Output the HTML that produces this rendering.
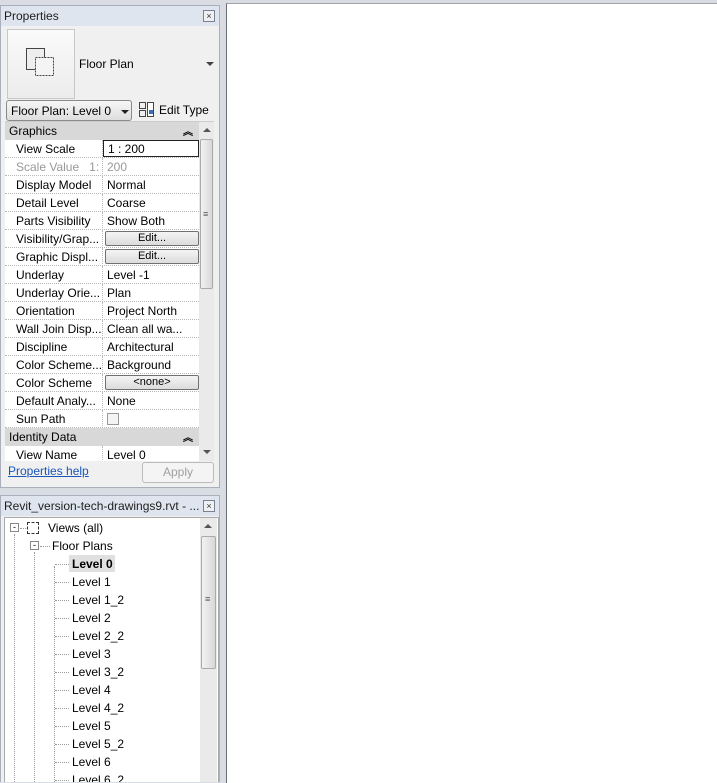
<!DOCTYPE html>
<html><head><style>
*{box-sizing:border-box;margin:0;padding:0}
html,body{width:717px;height:783px;overflow:hidden}
body{background:#d9dde3;font-family:"Liberation Sans",sans-serif;font-size:12px;color:#000;position:relative}
.abs{position:absolute}
.panel{position:absolute;left:0;width:220px;background:#f0f0f0;border:1px solid #a9b0bb;overflow:hidden}
.title{position:absolute;left:0;right:0;top:0;height:20px;background:#dfe5ee;color:#1e1e1e;padding:3px 0 0 3px;font-size:12px}
.xbtn{position:absolute;right:4px;top:4px;width:12px;height:12px;border:1px solid #7a8190;background:#eef0f3;font-size:9px;line-height:10px;text-align:center;color:#333}
.row{position:absolute;left:4px;width:194px;height:18px;border-bottom:1px dotted #b8b8b8;background:#fff}
.row .n{position:absolute;left:0;width:98px;height:18px;padding:2px 0 0 11px;border-right:1px dotted #b8b8b8;white-space:nowrap;overflow:hidden}
.row .v{position:absolute;left:98px;width:96px;padding:2px 0 0 4px;white-space:nowrap;overflow:hidden}
.hdr{position:absolute;left:4px;width:194px;height:18px;background:#d8d8d8;padding:2px 0 0 4px}
.hdr span{position:absolute;right:6px;top:1px;font-size:10px;font-weight:bold}
.btn{position:absolute;left:100px;top:1px;width:94px;height:15px;border:1px solid #707070;border-radius:2px;background:linear-gradient(#f4f4f4,#dcdcdc);text-align:center;font-size:11px;line-height:13px}
.tr{position:absolute;height:18px;line-height:18px;white-space:nowrap;font-weight:normal}
.dh{position:absolute;border-top:1px dotted #999;width:14px}
.tbl{position:absolute;left:0;top:-2px;width:220px;height:460px}
</style></head><body>
<div class="abs" style="left:226px;top:3px;width:491px;height:780px;background:#fff;border-left:1px solid #6b6f75;border-top:1px solid #a0a4aa"></div>

<div class="panel" style="top:5px;height:483px">
  <div class="title">Properties<div class="xbtn">×</div></div>
  <div class="abs" style="left:6px;top:23px;width:68px;height:70px;border:1px solid #c8c8c8;background:linear-gradient(#fafafa,#ececec)"></div>
  <svg class="abs" style="left:24px;top:41px" width="34" height="34"><rect x="1.5" y="1.5" width="18" height="21" fill="#eee" stroke="#444"/><rect x="10.5" y="10.5" width="18" height="18" fill="#f4f4f4" stroke="#444" stroke-dasharray="2 1"/></svg>
  <div class="abs" style="left:78px;top:51px;font-size:12px">Floor Plan</div>
  <div class="abs" style="left:205px;top:56px;width:0;height:0;border-left:4px solid transparent;border-right:4px solid transparent;border-top:4px solid #444"></div>
  <div class="abs" style="left:5px;top:94px;width:126px;height:21px;border:1px solid #8a8a8a;border-radius:3px;background:linear-gradient(#f6f6f6,#dedede);padding:3px 0 0 4px">Floor Plan: Level 0</div>
  <div class="abs" style="left:120px;top:104px;border-left:4px solid transparent;border-right:4px solid transparent;border-top:4px solid #222"></div>
  <svg class="abs" style="left:137px;top:95px" width="18" height="18"><rect x="1.5" y="1.5" width="6" height="6" fill="none" stroke="#444"/><rect x="1.5" y="9.5" width="6" height="6" fill="none" stroke="#444"/><rect x="9.5" y="1.5" width="6" height="14" fill="#fff" stroke="#444"/><rect x="11" y="9" width="4" height="4" fill="#3a6fb5"/></svg>
  <div class="abs" style="left:158px;top:97px">Edit Type</div>
  <div class="tbl">
  <div class="abs" style="left:4px;top:117px;width:209px;height:340px;background:#fff;border-top:1px solid #ccc"></div>
  <div class="hdr" style="top:118px">Graphics<span>︽</span></div>
  <div class="row" style="top:136px"><div class="n">View Scale</div><div class="v" style="border:1px solid #222;height:17px;padding-top:1px">1 : 200</div></div>
  <div class="row" style="top:154px;color:#999"><div class="n">Scale Value &nbsp;&nbsp;1:</div><div class="v">200</div></div>
  <div class="row" style="top:172px"><div class="n">Display Model</div><div class="v">Normal</div></div>
  <div class="row" style="top:190px"><div class="n">Detail Level</div><div class="v">Coarse</div></div>
  <div class="row" style="top:208px"><div class="n">Parts Visibility</div><div class="v">Show Both</div></div>
  <div class="row" style="top:226px"><div class="n">Visibility/Grap...</div><div class="btn">Edit...</div></div>
  <div class="row" style="top:244px"><div class="n">Graphic Displ...</div><div class="btn">Edit...</div></div>
  <div class="row" style="top:262px"><div class="n">Underlay</div><div class="v">Level -1</div></div>
  <div class="row" style="top:280px"><div class="n">Underlay Orie...</div><div class="v">Plan</div></div>
  <div class="row" style="top:298px"><div class="n">Orientation</div><div class="v">Project North</div></div>
  <div class="row" style="top:316px"><div class="n">Wall Join Disp...</div><div class="v">Clean all wa...</div></div>
  <div class="row" style="top:334px"><div class="n">Discipline</div><div class="v">Architectural</div></div>
  <div class="row" style="top:352px"><div class="n">Color Scheme...</div><div class="v">Background</div></div>
  <div class="row" style="top:370px"><div class="n">Color Scheme</div><div class="btn">&lt;none&gt;</div></div>
  <div class="row" style="top:388px"><div class="n">Default Analy...</div><div class="v">None</div></div>
  <div class="row" style="top:406px"><div class="n">Sun Path</div><div class="v"><div style="width:12px;height:12px;border:1px solid #999;background:#f4f4f4;margin-top:1px"></div></div></div>
  <div class="hdr" style="top:424px">Identity Data<span>︽</span></div>
  <div class="row" style="top:442px;height:15px;overflow:hidden;border:none"><div class="n">View Name</div><div class="v">Level 0</div></div>
  <div class="abs" style="left:198px;top:118px;width:15px;height:339px;background:#eaeaea"></div>
  <div class="abs" style="left:202px;top:124px;border-left:4px solid transparent;border-right:4px solid transparent;border-bottom:4px solid #555"></div>
  <div class="abs" style="left:199px;top:135px;width:13px;height:150px;border:1px solid #aaa;border-radius:2px;background:linear-gradient(90deg,#f2f2f2,#d8d8d8)"></div>
  <div class="abs" style="left:202px;top:205px;font-size:9px;color:#555">≡</div>
  <div class="abs" style="left:202px;top:446px;border-left:4px solid transparent;border-right:4px solid transparent;border-top:4px solid #555"></div>
  </div>
  <div class="abs" style="left:7px;top:458px;color:#1a56b8;text-decoration:underline">Properties help</div>
  <div class="abs" style="left:141px;top:456px;width:72px;height:21px;border:1px solid #bbb;border-radius:3px;background:#f4f4f4;color:#a0a0a0;text-align:center;line-height:19px">Apply</div>
</div>

<div class="panel" style="top:495px;height:287px;border-bottom:none">
  <div class="title">Revit_version-tech-drawings9.rvt - ...<div class="xbtn">×</div></div>
  <div class="abs" style="left:3px;top:21px;width:215px;height:270px;background:#fff;border:1px solid #aaa"></div>
  <div class="abs" style="left:199px;top:22px;width:17px;height:268px;background:#eaeaea"></div>
  <div class="abs" style="left:203px;top:28px;border-left:4px solid transparent;border-right:4px solid transparent;border-bottom:4px solid #555"></div>
  <div class="abs" style="left:200px;top:40px;width:15px;height:133px;border:1px solid #aaa;border-radius:2px;background:linear-gradient(90deg,#f2f2f2,#d8d8d8)"></div>
  <div class="abs" style="left:204px;top:98px;font-size:9px;color:#555">≡</div>
  <div class="abs" style="left:13px;top:38px;height:260px;border-left:1px dotted #999"></div>
  <div class="abs" style="left:33px;top:56px;height:240px;border-left:1px dotted #999"></div>
  <div class="abs" style="left:53px;top:70px;height:220px;border-left:1px dotted #999"></div>
  <div class="abs" style="left:9px;top:27px;width:9px;height:9px;border:1px solid #888;background:#fff;font-size:9px;line-height:6px;text-align:center">-</div>
  <div class="dh" style="left:19px;top:32px;width:6px"></div>
  <div class="abs" style="left:26px;top:26px;width:12px;height:12px;border:1px dashed #333"></div>
  <div class="tr" style="left:47px;top:23px">Views (all)</div>
  <div class="abs" style="left:29px;top:45px;width:9px;height:9px;border:1px solid #888;background:#fff;font-size:9px;line-height:6px;text-align:center">-</div>
  <div class="dh" style="left:39px;top:50px;width:10px"></div>
  <div class="tr" style="left:51px;top:41px">Floor Plans</div>
  <div class="abs" style="left:68px;top:59px;width:46px;height:17px;background:#e0e0e0"></div>
  <div class="tr" style="left:71px;top:59px;font-weight:bold">Level 0</div>
  <div class="dh" style="left:54px;top:68px"></div>
  <div class="dh" style="left:54px;top:86px"></div><div class="tr" style="left:71px;top:77px">Level 1</div>
  <div class="dh" style="left:54px;top:104px"></div><div class="tr" style="left:71px;top:95px">Level 1_2</div>
  <div class="dh" style="left:54px;top:122px"></div><div class="tr" style="left:71px;top:113px">Level 2</div>
  <div class="dh" style="left:54px;top:140px"></div><div class="tr" style="left:71px;top:131px">Level 2_2</div>
  <div class="dh" style="left:54px;top:158px"></div><div class="tr" style="left:71px;top:149px">Level 3</div>
  <div class="dh" style="left:54px;top:176px"></div><div class="tr" style="left:71px;top:167px">Level 3_2</div>
  <div class="dh" style="left:54px;top:194px"></div><div class="tr" style="left:71px;top:185px">Level 4</div>
  <div class="dh" style="left:54px;top:212px"></div><div class="tr" style="left:71px;top:203px">Level 4_2</div>
  <div class="dh" style="left:54px;top:230px"></div><div class="tr" style="left:71px;top:221px">Level 5</div>
  <div class="dh" style="left:54px;top:248px"></div><div class="tr" style="left:71px;top:239px">Level 5_2</div>
  <div class="dh" style="left:54px;top:266px"></div><div class="tr" style="left:71px;top:257px">Level 6</div>
  <div class="dh" style="left:54px;top:284px"></div><div class="tr" style="left:71px;top:275px">Level 6_2</div>
</div>
</body></html>
